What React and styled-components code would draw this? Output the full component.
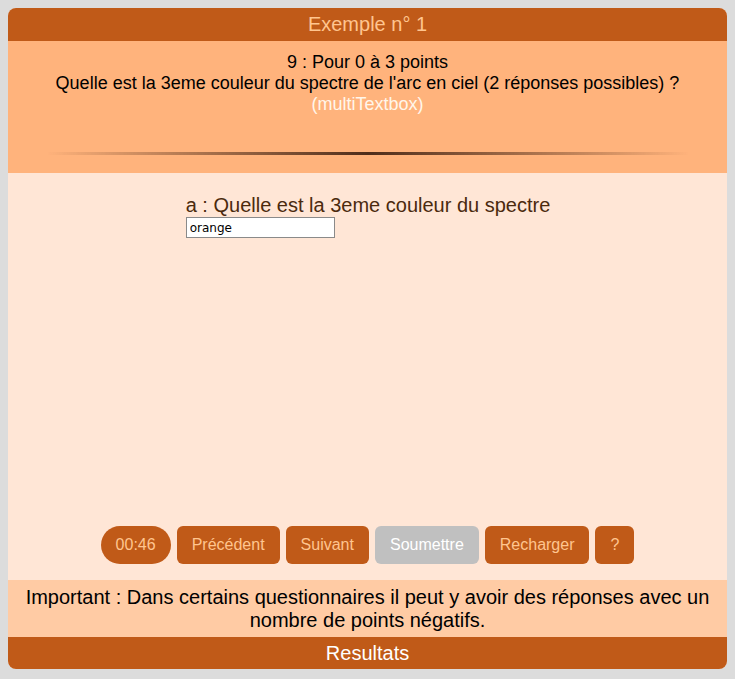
import React from 'react';
import styled, { createGlobalStyle } from 'styled-components';

const GlobalStyle = createGlobalStyle`
	body {
		margin: 8px;
		background: #dcdcdc;
		font-family: 'Liberation Sans', Arial, sans-serif;
	}
`;

const Card = styled.div`
	width: 719px;
	height: 661px;
	border-radius: 8px;
	overflow: hidden;
	display: flex;
	flex-direction: column;
	background: #ffe6d6;
`;

const Bar = styled.div`
	background: #c05a18;
	color: ${props => props.light ? '#ffffff' : '#ffc58f'};
	text-align: center;
	font-size: 20px;
	height: ${props => props.h}px;
	line-height: ${props => props.h}px;
	flex-shrink: 0;
`;

const Question = styled.div`
	background: #ffb37c;
	height: 132px;
	padding-top: 11px;
	box-sizing: border-box;
	text-align: center;
	font-size: 18px;
	line-height: 21px;
	color: #000;
	display: flex;
	flex-direction: column;
	align-items: center;
`;

const Kind = styled.span`
	color: #fff6ea;
`;

const Rule = styled.div`
	width: 642px;
	height: 3px;
	margin-top: 37px;
	background: linear-gradient(to right, rgba(80, 40, 20, 0), rgba(60, 30, 15, 0.9) 50%, rgba(80, 40, 20, 0));
	filter: blur(0.4px);
`;

const Body = styled.div`
	flex: 1;
	display: flex;
	flex-direction: column;
	align-items: center;
	padding-top: 20px;
`;

const Field = styled.div`
	display: flex;
	flex-direction: column;
	align-items: flex-start;
	margin-left: 1px;
`;

const Label = styled.label`
	font-size: 20px;
	color: #4b2a0e;
	line-height: 24px;
`;

const Input = styled.input`
	width: 149px;
	height: 21px;
	box-sizing: border-box;
	border: 1px solid #8a8a8a;
	font-family: 'DejaVu Sans', sans-serif;
	font-size: 12px;
	padding: 1px 3px;
	background: #fff;
`;

const Buttons = styled.div`
	margin-top: auto;
	margin-bottom: 16px;
	display: flex;
	gap: 6px;
`;

const Btn = styled.button`
	height: 38px;
	padding: 0 15px;
	border: none;
	border-radius: ${props => props.pill ? '19px' : '6px'};
	background: ${props => props.disabled ? '#c0c0c0' : '#c05a18'};
	color: ${props => props.disabled ? '#ffffff' : '#ffc58f'};
	font-family: 'Liberation Sans', Arial, sans-serif;
	font-size: 16px;
	cursor: pointer;
`;

const Notice = styled.div`
	background: #ffcba4;
	height: 57px;
	box-sizing: border-box;
	padding: 6px 8px 0;
	text-align: center;
	font-size: 20px;
	line-height: 23px;
	color: #000;
	flex-shrink: 0;
`;

export default function App() {
	return (
		<>
			<GlobalStyle />
			<Card>
				<Bar h={33}>Exemple n° 1</Bar>
				<Question>
					<div>9 : Pour 0 à 3 points</div>
					<div>Quelle est la 3eme couleur du spectre de l'arc en ciel (2 réponses possibles) ?</div>
					<Kind>(multiTextbox)</Kind>
					<Rule />
				</Question>
				<Body>
					<Field>
						<Label>a : Quelle est la 3eme couleur du spectre</Label>
						<Input defaultValue="orange" />
					</Field>
					<Buttons>
						<Btn pill>00:46</Btn>
						<Btn>Précédent</Btn>
						<Btn>Suivant</Btn>
						<Btn disabled>Soumettre</Btn>
						<Btn>Recharger</Btn>
						<Btn>?</Btn>
					</Buttons>
				</Body>
				<Notice>
					Important : Dans certains questionnaires il peut y avoir des réponses avec un nombre de points négatifs.
				</Notice>
				<Bar h={32} light>Resultats</Bar>
			</Card>
		</>
	);
}
